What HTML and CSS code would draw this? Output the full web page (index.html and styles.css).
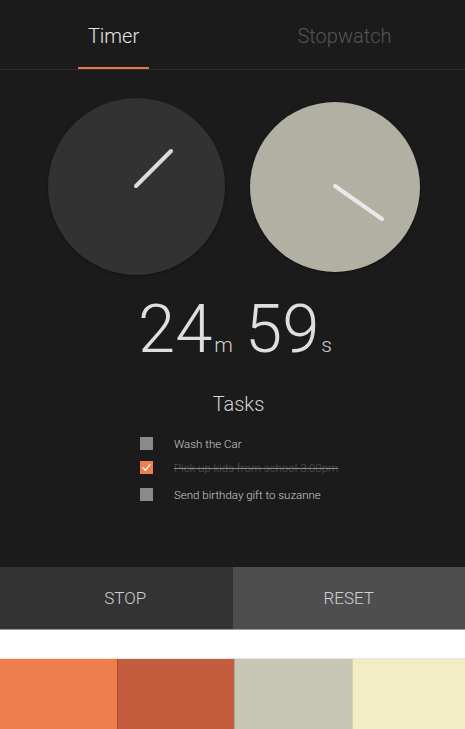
FILE: index.html
```html
<!DOCTYPE html>
<html>
<head>
<meta charset="utf-8">
<link rel="stylesheet" href="styles.css">
</head>
<body>
<div class="app">
  <div class="tabs">
    <div class="tab tab-active"><span class="tab-label">Timer</span></div>
    <div class="tab"><span class="tab-label">Stopwatch</span></div>
  </div>
  <div class="dials">
    <div class="dial dial-dark">
      <svg width="177" height="177" viewBox="0 0 177 177"><line x1="88" y1="88" x2="123" y2="53" stroke="#dcdcdc" stroke-width="4" stroke-linecap="round"/></svg>
    </div>
    <div class="dial dial-light">
      <svg width="170" height="170" viewBox="0 0 170 170"><line x1="85" y1="84" x2="132" y2="117" stroke="#e8e8e8" stroke-width="4" stroke-linecap="round"/></svg>
    </div>
  </div>
  <div class="time">
    <span class="num">24</span><span class="unit">m</span><span class="num num-sec">59</span><span class="unit">s</span>
  </div>
  <div class="tasks-title">Tasks</div>
  <ul class="tasks">
    <li class="task"><span class="box"></span><span class="task-text">Wash the Car</span></li>
    <li class="task task-done"><span class="box box-checked"><svg width="13" height="13" viewBox="0 0 13 13"><path d="M3 6.8 L5.4 9.2 L10 3.6" fill="none" stroke="#fff" stroke-width="1.4" stroke-linecap="round" stroke-linejoin="round"/></svg></span><span class="task-text">Pick up kids from school 3:00pm</span></li>
    <li class="task task-last"><span class="box"></span><span class="task-text">Send birthday gift to suzanne</span></li>
  </ul>
  <div class="spacer"></div>
  <div class="buttons">
    <div class="btn btn-stop">STOP</div>
    <div class="btn btn-reset">RESET</div>
  </div>
  <div class="strip"></div>
  <div class="swatches">
    <div class="swatch sw-1"></div>
    <div class="swatch sw-2"></div>
    <div class="swatch sw-3"></div>
    <div class="swatch sw-4"></div>
  </div>
</div>
</body>
</html>
```
FILE: styles.css
```css
html, body {
  margin: 0;
  padding: 0;
}
body {
  background: #1b1b1b;
  font-family: Roboto, "Liberation Sans", sans-serif;
  font-weight: 300;
  width: 465px;
  height: 729px;
  overflow: hidden;
}
.app {
  display: flex;
  flex-direction: column;
  height: 729px;
}
.tabs {
  display: flex;
  height: 69px;
  border-bottom: 1px solid #2f2f2f;
}
.tab {
  flex: 1;
  display: flex;
  justify-content: center;
  padding-right: 7px;
}
.tab:first-child {
  padding-right: 4px;
}
.tab-label {
  font-size: 20px;
  color: #555555;
  padding: 24px 10px 0;
  height: 43px;
  line-height: 24px;
}
.tab-active .tab-label {
  color: #e6e6e6;
  border-bottom: 2px solid #e8744a;
  margin-bottom: -1px;
}
.dials {
  display: flex;
  align-items: center;
  padding: 28px 0 0 48px;
  gap: 25px;
  height: 177px;
}
.dial {
  border-radius: 50%;
  box-shadow: 0 1px 3px rgba(0,0,0,0.35);
}
.dial svg {
  display: block;
}
.dial-dark {
  width: 177px;
  height: 177px;
  background: #323232;
}
.dial-light {
  width: 170px;
  height: 170px;
  background: #b1b0a3;
}
.time {
  display: flex;
  align-items: baseline;
  justify-content: center;
  margin-top: 14px;
  height: 80px;
  color: #dedede;
  padding-left: 5px;
}
.num {
  font-size: 67px;
  line-height: 80px;
  font-weight: 300;
}
.num-sec {
  margin-left: 12px;
}
.unit {
  font-size: 21px;
  margin-left: 2px;
  color: #cfcfcf;
}
.tasks-title {
  text-align: center;
  font-size: 20px;
  line-height: 26px;
  color: #d4d4d4;
  margin-top: 22px;
  padding-left: 12px;
}
.tasks {
  list-style: none;
  margin: 19px 0 0;
  padding: 0 0 0 140px;
  display: flex;
  flex-direction: column;
  gap: 9px;
}
.task {
  display: flex;
  align-items: center;
  height: 15px;
}
.task-last {
  margin-top: 3px;
}
.box {
  width: 13px;
  height: 13px;
  background: #8a8a8a;
  display: block;
}
.box-checked {
  background: #ee7e4b;
}
.box svg {
  display: block;
}
.task-text {
  margin-left: 21px;
  font-size: 11.5px;
  color: #cccccc;
  font-weight: 300;
}
.task-done .task-text {
  color: #555555;
  text-decoration: line-through;
  text-decoration-color: #8a8a8a;
}
.spacer {
  flex: 1;
}
.buttons {
  display: flex;
  height: 62px;
  border-bottom: 1px solid #9a9a9a;
}
.btn {
  flex: none;
  width: 50%;
  box-sizing: border-box;
  display: flex;
  align-items: center;
  justify-content: center;
  font-size: 17px;
  color: #cfcfcf;
}
.btn-stop {
  background: #333333;
  padding-left: 18px;
}
.btn-reset {
  background: #4e4e4e;
}
.strip {
  height: 28px;
  background: #ffffff;
  border-bottom: 1px solid #e6e6e6;
}
.swatches {
  display: flex;
  height: 70px;
}
.swatch {
  flex: none;
  width: 117px;
  box-sizing: border-box;
}
.sw-1 { background: #ee7e4b; }
.sw-2 { background: #c45d3e; border-left: 1px solid #a84c33; }
.sw-3 { background: #c7c6b4; border-left: 1px solid #a9a898; width: 118px; }
.sw-4 { background: #f3edc6; border-left: 1px solid #d6d1ad; flex: 1; }
```
